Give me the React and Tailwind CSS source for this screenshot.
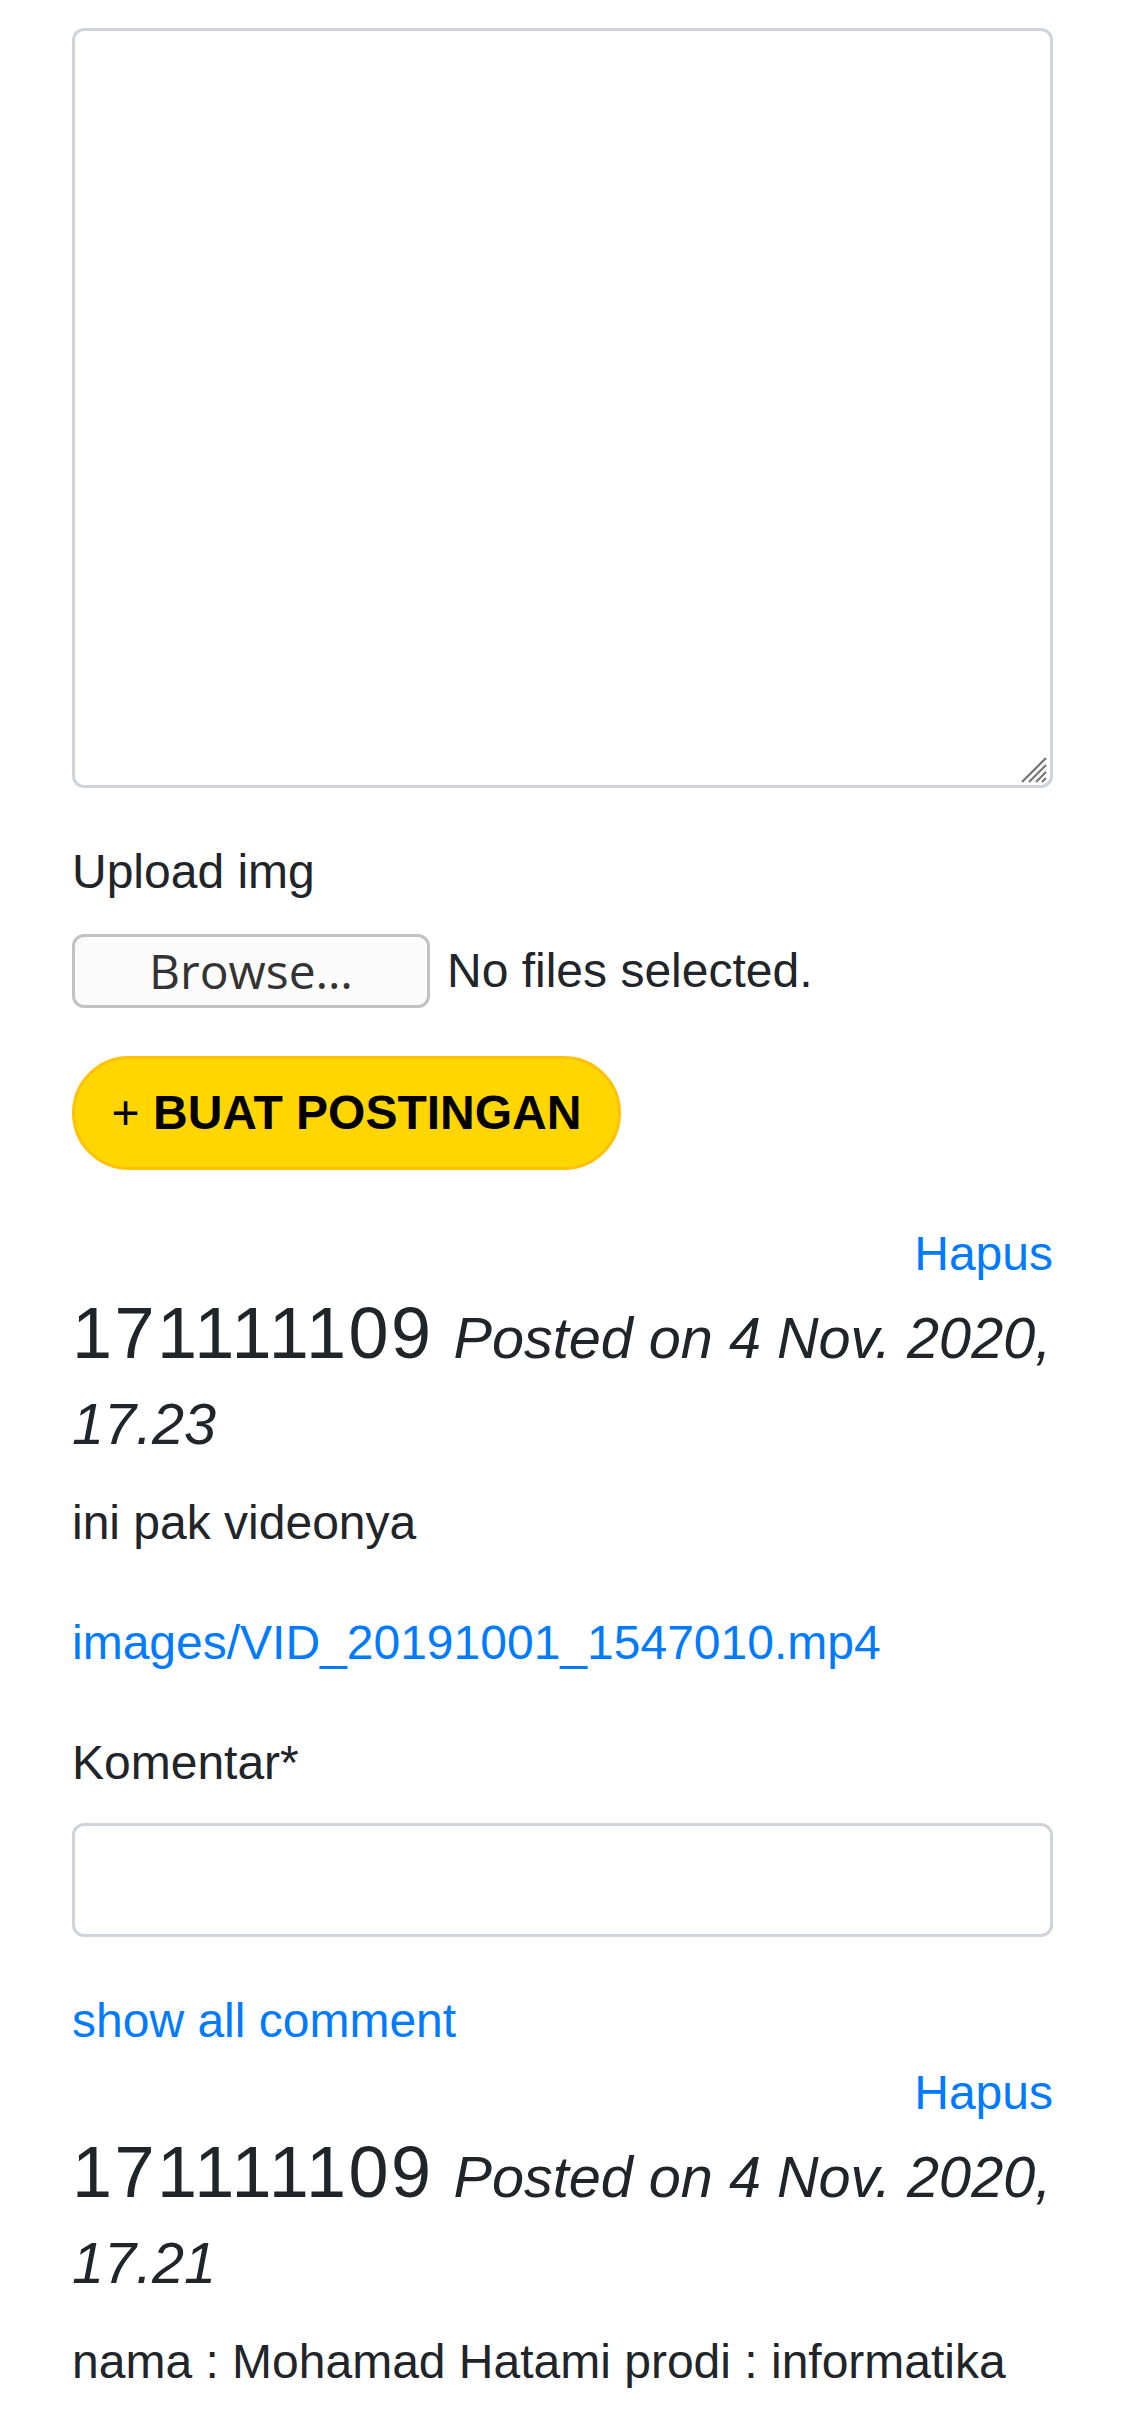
const Post = ({ time, body, link }) => {
  return (
    <div>
      <div className="text-right">
        <a href="#" className="text-[#007bff]">Hapus</a>
      </div>
      <h4 className="text-[72px] leading-[1.2] font-medium mb-[24px]">
        <span className="tracking-[2.5px]">171111109</span>{" "}
        <small className="text-[80%] font-normal italic">Posted on 4 Nov. 2020, {time}</small>
      </h4>
      <p className="mb-[48px]">{body}</p>
      {link && (
        <>
          <p className="mb-[48px]">
            <a href="#" className="text-[#007bff]">{link}</a>
          </p>
          <div className="mb-[48px]">
            <label className="block mb-[24px]">Komentar*</label>
            <div className="h-[114px] w-full border-[3px] border-[#ced4da] rounded-[12px] bg-white"></div>
          </div>
          <a href="#" className="block text-[#007bff]">show all comment</a>
        </>
      )}
    </div>
  );
};

const App = () => {
  return (
    <div className="min-h-screen bg-white px-[72px] pt-[28px] text-[48px] leading-[1.5] text-[#212529] font-['Liberation_Sans',Arial,sans-serif]">

      {/* TEXTAREA */}
      <div className="relative mb-[48px]">
        <div className="h-[760px] w-full border-[3px] border-[#ced4da] rounded-[12px] bg-white"></div>
        <svg className="absolute right-[5px] bottom-[4px]" width="28" height="28" viewBox="0 0 28 28">
          <g stroke="#767676" strokeWidth="2.2" strokeLinecap="butt">
            <line x1="2" y1="26" x2="26" y2="2" />
            <line x1="9" y1="26" x2="26" y2="9" />
            <line x1="16" y1="26" x2="26" y2="16" />
            <line x1="22" y1="26" x2="26" y2="22" />
          </g>
        </svg>
      </div>

      {/* UPLOAD */}
      <div className="mb-[48px]">
        <label className="block mb-[24px]">Upload img</label>
        <div className="h-[76px] flex items-end">
          <div className="h-[74px] w-[358px] flex items-center justify-center border-[3px] border-[#c2c2c2] rounded-[12px] bg-[#fbfbfb] text-[#333333] text-[48px] font-['Open_Sans',sans-serif]">
            Browse…
          </div>
          <span className="ml-[17px] self-center mt-[2px]">No files selected.</span>
        </div>
      </div>

      <button className="h-[114px] w-[549px] rounded-full bg-[#ffd600] border-[3px] border-[#ffc107] text-black text-[48px] mb-[48px] flex items-center justify-center">
        <span>+&nbsp;</span>
        <span className="font-bold">BUAT POSTINGAN</span>
      </button>

      <Post time="17.23" body="ini pak videonya" link="images/VID_20191001_1547010.mp4" />
      <Post time="17.21" body="nama : Mohamad Hatami prodi : informatika" />
    </div>
  );
};

export default App;
